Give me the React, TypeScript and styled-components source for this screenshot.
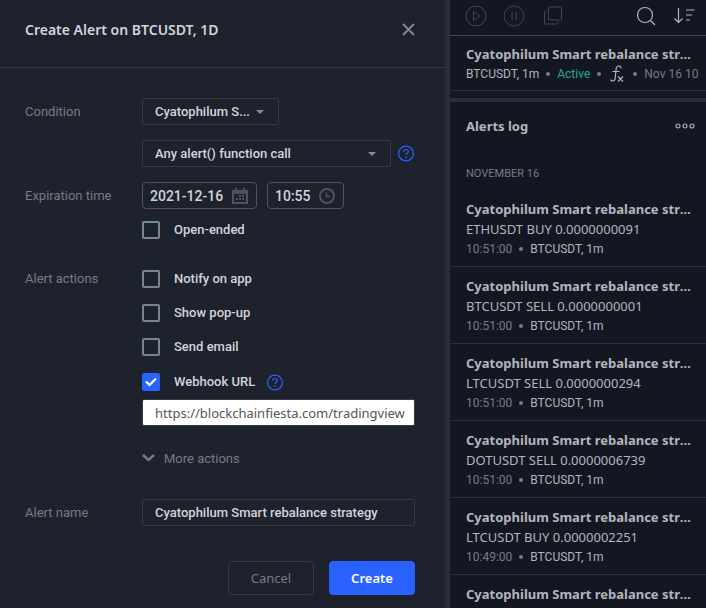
import React from "react";
import styled, { createGlobalStyle, css } from "styled-components";

const GlobalStyle = createGlobalStyle`
  *, *::before, *::after { box-sizing: border-box; }
  body {
    margin: 0;
    background: #131722;
    color: #d1d4dc;
    font-family: Roboto, sans-serif;
    font-size: 13px;
  }
  button, input, select { font: inherit; color: inherit; margin: 0; }
`;

const displayFont = `font-family: "Noto Sans", sans-serif;`;

const Page = styled.div`
  display: grid;
  grid-template-columns: minmax(0, 1fr) 256px;
  height: 100vh;
  overflow: hidden;
`;

/* Dialog */

const Dialog = styled.form`
  background: #1e222d;
  border-right: 5px solid #2a2e39;
  overflow: hidden;
`;

const DialogHeader = styled.header`
  display: flex;
  align-items: center;
  justify-content: space-between;
  height: 68px;
  padding: 0 29px 8px 25px;
  border-bottom: 1px solid #363a45;
`;

const DialogTitle = styled.h1`
  ${displayFont}
  margin: 0;
  font-size: 14px;
  line-height: 20px;
  font-weight: 600;
`;

const IconButton = styled.button<{ $color?: string }>`
  display: flex;
  padding: 0;
  border: 0;
  background: none;
  cursor: pointer;
  color: ${(p) => p.$color ?? "#b2b5be"};
`;

const DialogBody = styled.div`
  padding: 30px 30px 0 25px;
`;

const Section = styled.div<{ $top?: number }>`
  display: grid;
  grid-template-columns: 117px minmax(0, 1fr);
  margin-top: ${(p) => p.$top ?? 0}px;
`;

const fieldLabel = css<{ $line?: number }>`
  color: #787b86;
  line-height: ${(p) => p.$line ?? 27}px;
`;

const FieldLabel = styled.label<{ $line?: number }>`
  ${fieldLabel}
`;

const GroupLabel = styled.div<{ $line?: number }>`
  ${fieldLabel}
`;

const Stack = styled.div<{ $gap: number }>`
  display: flex;
  flex-direction: column;
  gap: ${(p) => p.$gap}px;
`;

const Line = styled.div<{ $gap: number }>`
  display: flex;
  align-items: center;
  gap: ${(p) => p.$gap}px;
`;

const SelectBox = styled.div<{ $width?: number }>`
  display: grid;
  align-items: center;
  ${(p) => (p.$width ? `width: ${p.$width}px;` : "flex: 1;")}

  select, svg { grid-area: 1 / 1; }
  svg { justify-self: end; margin-right: 15px; pointer-events: none; }
`;

const Select = styled.select`
  appearance: none;
  width: 100%;
  height: 27px;
  padding: 0 24px 0 12px;
  border: 1px solid #363a45;
  border-radius: 2px;
  background: transparent;
  font-weight: 500;
`;

const TimeBox = styled.div<{ $width: number }>`
  display: flex;
  align-items: center;
  width: ${(p) => p.$width}px;
  height: 27px;
  padding: 0 8px 0 7px;
  border: 1px solid #50535e;
  border-radius: 4px;
  color: #50535e;
`;

const TimeInput = styled.input`
  flex: 1;
  min-width: 0;
  padding: 0;
  border: 0;
  background: none;
  color: #d1d4dc;
  font-size: 14px;
  font-weight: 500;
`;

const CheckRow = styled.div`
  display: flex;
  align-items: center;
  height: 18px;

  label {
    padding-left: 14px;
    margin-right: 12px;
    font-weight: 500;
    line-height: 18px;
  }
`;

const CheckBox = styled.span`
  display: grid;
  width: 18px;
  height: 18px;

  input, svg { grid-area: 1 / 1; }
  input {
    appearance: none;
    width: 18px;
    height: 18px;
    border: 2px solid #758696;
    border-radius: 2px;
  }
  input:checked { background: #2962ff; border-color: #2962ff; }
  svg { visibility: hidden; pointer-events: none; }
  input:checked + svg { visibility: visible; }
`;

const TextInput = styled.input`
  width: 100%;
  height: 27px;
  padding: 0 12px;
  border: 1px solid #363a45;
  border-radius: 2px;
  background: transparent;
  font-weight: 500;
`;

const UrlInput = styled(TextInput)`
  ${displayFont}
  padding-right: 9px;
  background: #ffffff;
  color: #555555;
  font-weight: 400;
`;

const WebhookField = styled.div`
  display: grid;
  gap: 8px;
  margin: 17px 0 22px;
`;

const MoreButton = styled.button`
  display: flex;
  align-items: center;
  gap: 9px;
  height: 20px;
  padding: 0;
  border: 0;
  background: none;
  color: #787b86;
`;

const Actions = styled.footer`
  display: flex;
  justify-content: flex-end;
  gap: 15px;
  margin-top: 35px;
`;

const ActionButton = styled.button<{ $primary?: boolean }>`
  ${displayFont}
  width: 86px;
  height: 34px;
  padding: 0;
  border: 1px solid ${(p) => (p.$primary ? "#2962ff" : "#363a45")};
  border-radius: 4px;
  background: ${(p) => (p.$primary ? "#2962ff" : "transparent")};
  color: ${(p) => (p.$primary ? "#ffffff" : "#787b86")};
  font-weight: ${(p) => (p.$primary ? 600 : 400)};
`;

/* Sidebar */

const Sidebar = styled.aside`
  display: flex;
  flex-direction: column;
  min-height: 0;
  overflow: hidden;
  color: #b2b5be;
`;

const Toolbar = styled.div`
  display: flex;
  align-items: center;
  flex: none;
  gap: 16px;
  height: 36px;
  padding: 0 11px 3px 15px;
  border-bottom: 1px solid #434651;
`;

const Spacer = styled.span`
  flex: 1;
`;

const ActiveAlert = styled.article`
  flex: none;
  height: 55px;
  padding: 8px 10px 6px 16px;
  border-bottom: 1px solid #2a2e39;
`;

const ItemTitle = styled.h3`
  ${displayFont}
  margin: 0;
  padding-right: 4px;
  overflow: hidden;
  font-size: 13px;
  font-weight: 700;
  line-height: 20px;
  text-overflow: ellipsis;
  white-space: nowrap;
`;

const Meta = styled.div`
  display: flex;
  align-items: center;
  gap: 7px;
  height: 20px;
  font-size: 12px;
  line-height: 20px;
  white-space: nowrap;
  svg { flex: none; }
`;

const Dot = styled.span`
  flex: none;
  width: 4px;
  height: 4px;
  border-radius: 50%;
  background: #787b86;
`;

const Muted = styled.span`
  color: #787b86;
`;

const Status = styled.span`
  color: #26a69a;
`;

const LogPanel = styled.section`
  flex: 1;
  min-height: 0;
  margin-top: 7px;
  border-top: 4px solid #2a2e39;
  overflow: hidden;
`;

const LogHeader = styled.header`
  display: flex;
  align-items: center;
  justify-content: space-between;
  height: 48px;
  padding: 0 11px 0 16px;
`;

const LogTitle = styled.h2`
  ${displayFont}
  margin: 0;
  font-size: 13px;
  font-weight: 700;
  line-height: 20px;
`;

const DateHeading = styled.div`
  padding: 16px 16px 8px;
  color: #787b86;
  font-size: 11px;
  line-height: 16px;
`;

const LogItem = styled.article`
  padding: 9px 10px 7px 16px;
  border-bottom: 1px solid #2a2e39;
`;

const Message = styled.div`
  ${displayFont}
  font-size: 13px;
  line-height: 20px;
  white-space: nowrap;
`;

const Caret = () => (
  <svg width="8" height="4" viewBox="0 0 8 4" fill="#868993">
    <path d="M0 0h8L4 4z" />
  </svg>
);

const HelpIcon = () => (
  <svg width="17" height="17" viewBox="0 0 17 17" fill="none" stroke="currentColor" strokeWidth="1.2">
    <circle cx="8" cy="8.5" r="7.4" />
    <path d="M5.6 6.8C5.6 5.3 6.6 4.5 8 4.500s2.400.8 2.400 2.100c0 1.700-2.300 1.700-2.300 3.400" />
    <path d="M7.300 12.300h1.500" strokeWidth="1.500" />
  </svg>
);

const CalendarIcon = () => (
  <svg width="16" height="16" viewBox="0 0 16 16" fill="currentColor">
    <path fillRule="evenodd" d="M0 2h3V0h2v2h6V0h2v2h3v14H0zM2 6v8h12V6z" />
    <path d="M7 7h2v2H7zM10 7h2v2h-2zM4 10h2v2H4zM7 10h2v2H7zM10 10h2v2h-2z" />
  </svg>
);

const ClockIcon = () => (
  <svg width="16" height="16" viewBox="0 0 16 16" fill="none" stroke="currentColor">
    <circle cx="8" cy="8" r="7" strokeWidth="2" />
    <path d="M7.500 4.500v4H11" strokeWidth="1.400" />
  </svg>
);

const Fx = () => (
  <svg width="18" height="18" viewBox="0 0 18 18" fill="none" stroke="#b2b5be" strokeWidth="1.200">
    <path d="M13 3.500C13 1.800 12.200 1 10.800 1 9 1 8.300 2.200 8.100 4L7.200 13c-.2 2-1 3-2.600 3-1.300 0-1.900-.6-1.900-1.600M4.500 6.500h7M10 11.500l5 5M15 11.500l-5 5" />
  </svg>
);

type CheckProps = { id: string; label: string; checked?: boolean; children?: React.ReactNode };

const Check = ({ id, label, checked, children }: CheckProps) => (
  <CheckRow>
    <CheckBox>
      <input type="checkbox" id={id} defaultChecked={checked} />
      <svg width="18" height="18" viewBox="0 0 18 18" fill="none" stroke="#fff" strokeWidth="2.200">
        <path d="M4 8.500l3.500 3.500L14 5.500" />
      </svg>
    </CheckBox>
    <label htmlFor={id}>{label}</label>
    {children}
  </CheckRow>
);

const STRATEGY = "Cyatophilum Smart rebalance strategy";

const LOG = [
  { message: "ETHUSDT BUY 0.0000000091", time: "10:51:00" },
  { message: "BTCUSDT SELL 0.0000000001", time: "10:51:00" },
  { message: "LTCUSDT SELL 0.0000000294", time: "10:51:00" },
  { message: "DOTUSDT SELL 0.0000006739", time: "10:51:00" },
  { message: "LTCUSDT BUY 0.0000002251", time: "10:49:00" },
  { message: "", time: "" },
];

export default function App() {
  return (
    <>
      <GlobalStyle />
      <Page>
        <Dialog onSubmit={(e) => e.preventDefault()}>
          <DialogHeader>
            <DialogTitle>Create Alert on BTCUSDT, 1D</DialogTitle>
            <IconButton type="button" aria-label="Close" $color="#868993">
              <svg width="15" height="15" viewBox="0 0 15 15" fill="none" stroke="currentColor" strokeWidth="1.800">
                <path d="M2 2l11 11M13 2L2 13" />
              </svg>
            </IconButton>
          </DialogHeader>

          <DialogBody>
            <Section>
              <FieldLabel htmlFor="condition">Condition</FieldLabel>
              <Stack $gap={15}>
                <SelectBox $width={137}>
                  <Select id="condition">
                    <option>Cyatophilum S...</option>
                  </Select>
                  <Caret />
                </SelectBox>
                <Line $gap={7}>
                  <SelectBox>
                    <Select aria-label="Trigger">
                      <option>Any alert() function call</option>
                    </Select>
                    <Caret />
                  </SelectBox>
                  <IconButton type="button" aria-label="Condition help" $color="#2962ff">
                    <HelpIcon />
                  </IconButton>
                </Line>
              </Stack>
            </Section>

            <Section $top={15}>
              <FieldLabel htmlFor="date">Expiration time</FieldLabel>
              <Stack $gap={12}>
                <Line $gap={10}>
                  <TimeBox $width={115}>
                    <TimeInput id="date" defaultValue="2021-12-16" />
                    <CalendarIcon />
                  </TimeBox>
                  <TimeBox $width={77}>
                    <TimeInput aria-label="Expiration hour" defaultValue="10:55" />
                    <ClockIcon />
                  </TimeBox>
                </Line>
                <Check id="open" label="Open-ended" />
              </Stack>
            </Section>

            <Section $top={31}>
              <GroupLabel $line={18}>Alert actions</GroupLabel>
              <div>
                <Stack $gap={16}>
                  <Check id="app" label="Notify on app" />
                  <Check id="popup" label="Show pop-up" />
                  <Check id="email" label="Send email" />
                </Stack>
                <WebhookField>
                  <Check id="webhook" label="Webhook URL" checked>
                    <IconButton type="button" aria-label="Webhook help" $color="#2962ff">
                      <HelpIcon />
                    </IconButton>
                  </Check>
                  <UrlInput aria-label="Webhook address" defaultValue="https://blockchainfiesta.com/tradingview" />
                </WebhookField>
                <MoreButton type="button">
                  <svg width="13" height="8" viewBox="0 0 13 8" fill="none" stroke="currentColor" strokeWidth="2.400">
                    <path d="M1 1l5.500 5L12 1" />
                  </svg>
                  More actions
                </MoreButton>
              </div>
            </Section>

            <Section $top={31}>
              <FieldLabel htmlFor="name">Alert name</FieldLabel>
              <TextInput id="name" defaultValue={STRATEGY} />
            </Section>

            <Actions>
              <ActionButton type="button">Cancel</ActionButton>
              <ActionButton type="submit" $primary>
                Create
              </ActionButton>
            </Actions>
          </DialogBody>
        </Dialog>

        <Sidebar>
          <Toolbar>
            <IconButton type="button" aria-label="Start" $color="#434651">
              <svg width="22" height="22" viewBox="0 0 22 22" fill="none" stroke="currentColor">
                <circle cx="11" cy="11" r="10" />
                <path d="M8.500 6.500v9l6.500-4.500z" />
              </svg>
            </IconButton>
            <IconButton type="button" aria-label="Pause" $color="#434651">
              <svg width="22" height="22" viewBox="0 0 22 22" fill="none" stroke="currentColor">
                <circle cx="11" cy="11" r="10" />
                <path d="M9 6.500v9M13 6.500v9" />
              </svg>
            </IconButton>
            <IconButton type="button" aria-label="Clone" $color="#434651">
              <svg width="22" height="22" viewBox="0 0 22 22" fill="none" stroke="currentColor">
                <rect x="7.500" y="2" width="13" height="13" rx="1" />
                <path d="M6 6H4.500a1 1 0 0 0-1 1v11a1 1 0 0 0 1 1H16a1 1 0 0 0 1-1v-1.500" />
              </svg>
            </IconButton>
            <Spacer />
            <IconButton type="button" aria-label="Search">
              <svg width="20" height="20" viewBox="0 0 20 20" fill="none" stroke="currentColor" strokeWidth="1.200">
                <circle cx="8" cy="9" r="7.500" />
                <path d="M13.500 14.500l4.500 4.500" />
              </svg>
            </IconButton>
            <IconButton type="button" aria-label="Sort">
              <svg width="22" height="18" viewBox="0 0 22 18" fill="none" stroke="currentColor" strokeWidth="1.200">
                <path d="M5.500 1v14.500M1.500 11.500l4 4 4-4M13 3h8.500M13 8h6M13 13h4" />
              </svg>
            </IconButton>
          </Toolbar>

          <ActiveAlert>
            <ItemTitle>{STRATEGY}</ItemTitle>
            <Meta>
              <span>BTCUSDT, 1m</span>
              <Dot />
              <Status>Active</Status>
              <Dot />
              <Fx />
              <Dot />
              <Muted>Nov 16 10</Muted>
            </Meta>
          </ActiveAlert>

          <LogPanel>
            <LogHeader>
              <LogTitle>Alerts log</LogTitle>
              <IconButton type="button" aria-label="More">
                <svg width="20" height="6" viewBox="0 0 20 6" fill="none" stroke="currentColor" strokeWidth="1.200">
                  <circle cx="3" cy="3" r="2" />
                  <circle cx="10" cy="3" r="2" />
                  <circle cx="17" cy="3" r="2" />
                </svg>
              </IconButton>
            </LogHeader>
            <DateHeading>NOVEMBER 16</DateHeading>
            {LOG.map((item, i) => (
              <LogItem key={i}>
                <ItemTitle>{STRATEGY}</ItemTitle>
                {item.message && (
                  <>
                    <Message>{item.message}</Message>
                    <Meta>
                      <Muted>{item.time}</Muted>
                      <Dot />
                      <span>BTCUSDT, 1m</span>
                    </Meta>
                  </>
                )}
              </LogItem>
            ))}
          </LogPanel>
        </Sidebar>
      </Page>
    </>
  );
}
